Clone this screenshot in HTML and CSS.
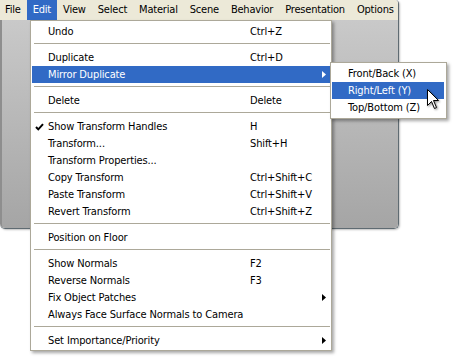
FILE: index.html
```html
<!DOCTYPE html>
<html>
<head>
<meta charset="utf-8">
<link rel="stylesheet" href="styles.css">
</head>
<body>
<div class="stage">
  <div class="window">
    <div class="menubar">
      <span class="mb-item">File</span>
      <span class="mb-item active">Edit</span>
      <span class="mb-item">View</span>
      <span class="mb-item">Select</span>
      <span class="mb-item">Material</span>
      <span class="mb-item">Scene</span>
      <span class="mb-item">Behavior</span>
      <span class="mb-item">Presentation</span>
      <span class="mb-item">Options</span>
    </div>
    <div class="client"></div>
  </div>

  <div class="menu main">
    <div class="row"><span class="chk"></span><span class="lbl">Undo</span><span class="key">Ctrl+Z</span></div>
    <div class="sep"></div>
    <div class="row"><span class="chk"></span><span class="lbl">Duplicate</span><span class="key">Ctrl+D</span></div>
    <div class="row hl"><span class="chk"></span><span class="lbl">Mirror Duplicate</span><span class="key"></span><svg class="arr" width="4" height="7" viewBox="0 0 4 7"><path d="M0 0L4 3.5L0 7Z"/></svg></div>
    <div class="sep"></div>
    <div class="row"><span class="chk"></span><span class="lbl">Delete</span><span class="key">Delete</span></div>
    <div class="sep"></div>
    <div class="row"><span class="chk"><svg width="9" height="8" viewBox="0 0 9 8"><path d="M1 4L3.3 6.4L8 1.2" fill="none" stroke="#000" stroke-width="2"/></svg></span><span class="lbl">Show Transform Handles</span><span class="key">H</span></div>
    <div class="row"><span class="chk"></span><span class="lbl">Transform...</span><span class="key">Shift+H</span></div>
    <div class="row"><span class="chk"></span><span class="lbl">Transform Properties...</span><span class="key"></span></div>
    <div class="row"><span class="chk"></span><span class="lbl">Copy Transform</span><span class="key">Ctrl+Shift+C</span></div>
    <div class="row"><span class="chk"></span><span class="lbl">Paste Transform</span><span class="key">Ctrl+Shift+V</span></div>
    <div class="row"><span class="chk"></span><span class="lbl">Revert Transform</span><span class="key">Ctrl+Shift+Z</span></div>
    <div class="sep"></div>
    <div class="row"><span class="chk"></span><span class="lbl">Position on Floor</span><span class="key"></span></div>
    <div class="sep"></div>
    <div class="row"><span class="chk"></span><span class="lbl">Show Normals</span><span class="key">F2</span></div>
    <div class="row"><span class="chk"></span><span class="lbl">Reverse Normals</span><span class="key">F3</span></div>
    <div class="row"><span class="chk"></span><span class="lbl">Fix Object Patches</span><span class="key"></span><svg class="arr" width="4" height="7" viewBox="0 0 4 7"><path d="M0 0L4 3.5L0 7Z"/></svg></div>
    <div class="row"><span class="chk"></span><span class="lbl">Always Face Surface Normals to Camera</span><span class="key"></span></div>
    <div class="sep"></div>
    <div class="row"><span class="chk"></span><span class="lbl">Set Importance/Priority</span><span class="key"></span><svg class="arr" width="4" height="7" viewBox="0 0 4 7"><path d="M0 0L4 3.5L0 7Z"/></svg></div>
  </div>

  <div class="menu sub">
    <div class="row"><span class="chk"></span><span class="lbl">Front/Back (X)</span></div>
    <div class="row hl"><span class="chk"></span><span class="lbl">Right/Left (Y)</span></div>
    <div class="row"><span class="chk"></span><span class="lbl">Top/Bottom (Z)</span></div>
  </div>

  <svg class="cursor" width="14" height="22" viewBox="0 0 14 22">
    <path d="M0.5 0.5V16.5L4.5 12.5L7.5 19.5L9.5 18.5L6.5 11.5H11.5Z" fill="#fff" stroke="#000" stroke-width="1" stroke-linejoin="miter"/>
  </svg>
</div>
</body>
</html>
```
FILE: styles.css
```css
html, body {
  margin: 0;
  padding: 0;
  background: #fff;
}
body {
  font-family: "DejaVu Sans Condensed", "DejaVu Sans", sans-serif;
  font-stretch: condensed;
  font-size: 11px;
  letter-spacing: -0.13px;
  color: #000;
}
.stage {
  position: relative;
  width: 460px;
  height: 360px;
  overflow: hidden;
}
.window {
  width: 399px;
  height: 229px;
  display: flex;
  flex-direction: column;
  box-sizing: border-box;
  border-right: 1px solid #5f6b72;
  border-bottom: 1px solid #5f6b72;
  border-radius: 0 4px 5px 5px;
  overflow: hidden;
  box-shadow: 1px 1px 2px rgba(0,0,0,0.25);
}
.menubar {
  height: 20px;
  flex: none;
  display: flex;
  background: #ece9d8;
  line-height: 20px;
  letter-spacing: -0.2px;
}
.mb-item {
  padding: 0 6px;
  white-space: nowrap;
}
.mb-item:first-child {
  padding-left: 5px;
}
.mb-item.active {
  background: #316ac5;
  color: #fff;
}
.client {
  flex: 1;
  background: linear-gradient(#c9c9c9, #a5a5a5);
  border-left: 2px solid #8e8e8e;
  border-radius: 0 0 0 4px;
}
.menu {
  position: absolute;
  background: #fff;
  box-sizing: border-box;
  border: 1px solid #aca899;
  box-shadow: 2px 2px 3px rgba(0,0,0,0.35);
}
.main {
  left: 30px;
  top: 20px;
  width: 302px;
  padding: 2px 1px 1px;
}
.sub {
  left: 330px;
  top: 62px;
  width: 117px;
  padding: 2px 2px 2px 1px;
}
.row {
  display: grid;
  grid-template-columns: 16px 202px 1fr 4px;
  align-items: center;
  height: 17px;
  padding-right: 4px;
  white-space: nowrap;
}
.sub .row {
  grid-template-columns: 16px 1fr;
}
.row.hl {
  background: #316ac5;
  color: #fff;
}
.chk {
  display: flex;
  align-items: center;
  padding-left: 3px;
}
.chk svg {
  display: block;
}
.arr {
  display: block;
  fill: currentColor;
}
.sep {
  height: 1px;
  background: #aca899;
  margin: 3px 0 5px 2px;
}
.cursor {
  position: absolute;
  left: 427px;
  top: 89px;
  filter: drop-shadow(1px 1px 1px rgba(0,0,0,0.45));
}
```
